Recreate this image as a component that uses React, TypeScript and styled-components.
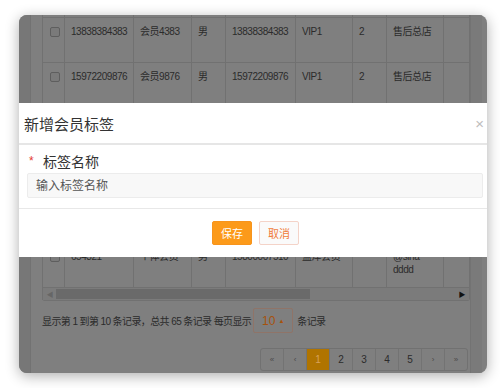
import React from 'react';
import styled, {createGlobalStyle} from 'styled-components';

const GlobalStyle = createGlobalStyle`
  html, body {
    margin: 0;
    padding: 0;
    background: #fff;
  }
  body {
    font-family: "Liberation Sans", "Noto Sans CJK SC", sans-serif;
  }
`;

const Stage = styled.div`
  width: 500px;
  height: 388px;
  padding: 15px 0 0 19px;
  box-sizing: border-box;
  overflow: hidden;
`;

// dimmed page behind the dialog, drawn in its darkened colours
const Window = styled.div`
  position: relative;
  width: 468px;
  height: 358px;
  border-radius: 8px;
  overflow: hidden;
  background: #7f7f7f;
  box-shadow: 0 3px 14px rgba(0, 0, 0, 0.32);
  display: flex;
`;

const SideStrip = styled.div`
  width: 11px;
  flex: none;
  background: #777;
  border-right: 1px solid #727272;
`;

const Main = styled.div`
  flex: 1;
  padding-left: 11px;
  display: flex;
  flex-direction: column;
`;

const RightStrip = styled.div`
  width: 11px;
  flex: none;
  background: #7a7a7a;
  border-left: 1px solid #737373;
  margin-right: 7px;
`;

const Table = styled.div`
  width: 427px;
  margin-top: -42px;
  border-right: 1px solid #717171;
  border-bottom: 1px solid #717171;
  border-radius: 0 0 3px 3px;
`;

const cols = '22px 69px 58px 34px 70px 57px 34px 57px 25px';

const Row = styled.div`
  display: grid;
  grid-template-columns: ${cols};
  height: 45px;
  box-sizing: border-box;
  border-bottom: 1px solid #717171;
`;

const Cell = styled.div<{$wrap?: boolean}>`
  border-left: 1px solid #717171;
  padding: 7px 0 0 6px;
  font-size: 10px;
  letter-spacing: -0.45px;
  line-height: 13px;
  color: #2b2b2b;
  overflow: hidden;
  white-space: ${p => (p.$wrap ? 'normal' : 'nowrap')};
  padding-right: ${p => (p.$wrap ? '6px' : '0')};
`;

const CheckCell = styled(Cell)`
  padding: 9px 0 0 7px;
`;

const Check = styled.span`
  display: block;
  width: 8px;
  height: 8px;
  border: 1px solid #5e5e5e;
  border-radius: 2px;
  background: #7a7a7a;
`;

const ScrollBar = styled.div`
  height: 12px;
  display: flex;
  align-items: center;
  padding: 0 1px;
  border-left: 1px solid #717171;
  background: #7b7b7b;
`;

const ScrollArrow = styled.span<{$right?: boolean}>`
  width: 12px;
  flex: none;
  font-size: 7px;
  color: ${p => (p.$right ? '#111' : '#666')};
  text-align: center;
`;

const ScrollTrack = styled.div`
  flex: 1;
  height: 10px;
  display: flex;
`;

const ScrollThumb = styled.div`
  width: 254px;
  height: 10px;
  background: #6a6a6a;
`;

const InfoRow = styled.div`
  margin-top: 7px;
  display: flex;
  align-items: center;
  font-size: 10px;
  letter-spacing: -0.6px;
  color: #2b2b2b;
  white-space: nowrap;
`;

const PageSize = styled.div`
  width: 40px;
  height: 25px;
  box-sizing: border-box;
  margin: 0 4px 0 2px;
  border: 1px solid #8f7468;
  border-radius: 2px;
  display: flex;
  align-items: center;
  justify-content: center;
  gap: 3px;
  color: #a6520c;
  font-size: 12px;
  letter-spacing: 0;

  span {
    font-size: 6px;
  }
`;

const Pager = styled.div`
  margin: 15px 0 0 218px;
  display: flex;
  width: 208px;
  height: 23px;
  border: 1px solid #717171;
  border-radius: 3px;
  box-sizing: border-box;
  overflow: hidden;
`;

const PageBtn = styled.div<{$active?: boolean; $small?: boolean}>`
  flex: 1;
  display: flex;
  align-items: center;
  justify-content: center;
  border-left: 1px solid #737373;
  font-size: ${p => (p.$small ? '8px' : '10px')};
  color: ${p => (p.$active ? '#d8a25a' : p.$small ? '#4a4a4a' : '#2b2b2b')};
  background: ${p => (p.$active ? '#b07400' : 'transparent')};

  &:first-child {
    border-left: none;
  }
`;

// dialog
const Modal = styled.div`
  position: absolute;
  left: 0;
  right: 0;
  top: 88px;
  height: 154px;
  background: #fff;
  display: flex;
  flex-direction: column;
`;

const ModalHeader = styled.div`
  height: 40px;
  display: flex;
  align-items: center;
  justify-content: space-between;
  padding: 0 3px 0 5px;
  border-bottom: 2px solid #e6e6e6;
`;

const Title = styled.h3`
  margin: 0;
  font-weight: normal;
  font-size: 15px;
  color: #333;
`;

const Close = styled.span`
  font-size: 15px;
  color: #bdbdbd;
  line-height: 1;
`;

const ModalBody = styled.div`
  padding: 7px 4px 10px 8px;
  border-bottom: 1px solid #e8e8e8;
`;

const Label = styled.div`
  display: flex;
  align-items: center;
  font-size: 14px;
  color: #333;
  height: 18px;
`;

const Star = styled.span`
  color: #e43a30;
  font-size: 12px;
  width: 14px;
  padding-left: 2px;
`;

const Input = styled.input`
  display: block;
  margin-top: 3px;
  width: 456px;
  height: 25px;
  box-sizing: border-box;
  border: 1px solid #ececec;
  border-radius: 2px;
  background: #f8f8f8;
  padding: 0 8px;
  font-family: inherit;
  font-size: 12px;
  color: #555;
  outline: none;

  &::placeholder {
    color: #555;
  }
`;

const ModalFooter = styled.div`
  flex: 1;
  display: flex;
  justify-content: center;
  align-items: flex-start;
  gap: 7px;
  padding: 12px 0 0 5px;
`;

const Button = styled.button<{$primary?: boolean}>`
  width: 40px;
  height: 24px;
  padding: 0;
  border-radius: 2px;
  font-family: inherit;
  font-size: 11px;
  border: 1px solid ${p => (p.$primary ? '#f7941d' : '#f4d3c8')};
  background: ${p => (p.$primary ? '#fc9a1a' : '#fafafa')};
  color: ${p => (p.$primary ? '#fff' : '#f07c3a')};
`;

type Member = {phone: string; tel: string; name: string; sex: string; level: string; count: string; shop: string};

const members: Member[] = [
  {phone: '13812345678', tel: '13812345678', name: '会员5678', sex: '男', level: 'VIP1', count: '2', shop: '售后总店'},
  {phone: '13838384383', tel: '13838384383', name: '会员4383', sex: '男', level: 'VIP1', count: '2', shop: '售后总店'},
  {phone: '15972209876', tel: '15972209876', name: '会员9876', sex: '男', level: 'VIP1', count: '2', shop: '售后总店'},
  {phone: '18600001111', tel: '18600001111', name: '会员1111', sex: '女', level: 'VIP1', count: '2', shop: '售后总店'},
  {phone: '13500002222', tel: '13500002222', name: '会员2222', sex: '男', level: 'VIP1', count: '2', shop: '售后总店'},
  {phone: '13700003333', tel: '13700003333', name: '会员3333', sex: '女', level: 'VIP1', count: '2', shop: '售后总店'},
  {phone: '654321', tel: '15800007510', name: '个体会员', sex: '男', level: '蓝泽会员', count: '', shop: '@sina dddd'},
];

export default function App() {
  return (
    <Stage>
      <GlobalStyle/>
      <Window>
        <SideStrip/>
        <Main>
          <Table>
            {members.map((m, i) => (
              <Row key={i}>
                <CheckCell><Check/></CheckCell>
                <Cell>{m.phone}</Cell>
                <Cell>{m.name}</Cell>
                <Cell>{m.sex}</Cell>
                <Cell>{m.tel}</Cell>
                <Cell>{m.level}</Cell>
                <Cell>{m.count}</Cell>
                <Cell $wrap>{m.shop}</Cell>
                <Cell/>
              </Row>
            ))}
            <ScrollBar>
              <ScrollArrow>◀</ScrollArrow>
              <ScrollTrack><ScrollThumb/></ScrollTrack>
              <ScrollArrow $right>▶</ScrollArrow>
            </ScrollBar>
          </Table>
          <InfoRow>
            显示第 1 到第 10 条记录，总共 65 条记录 每页显示
            <PageSize>10<span>▲</span></PageSize>
            条记录
          </InfoRow>
          <Pager>
            <PageBtn $small>«</PageBtn>
            <PageBtn $small>‹</PageBtn>
            <PageBtn $active>1</PageBtn>
            <PageBtn>2</PageBtn>
            <PageBtn>3</PageBtn>
            <PageBtn>4</PageBtn>
            <PageBtn>5</PageBtn>
            <PageBtn $small>›</PageBtn>
            <PageBtn $small>»</PageBtn>
          </Pager>
        </Main>
        <RightStrip/>

        <Modal>
          <ModalHeader>
            <Title>新增会员标签</Title>
            <Close>×</Close>
          </ModalHeader>
          <ModalBody>
            <Label><Star>*</Star>标签名称</Label>
            <Input placeholder="输入标签名称"/>
          </ModalBody>
          <ModalFooter>
            <Button $primary>保存</Button>
            <Button>取消</Button>
          </ModalFooter>
        </Modal>
      </Window>
    </Stage>
  );
}
